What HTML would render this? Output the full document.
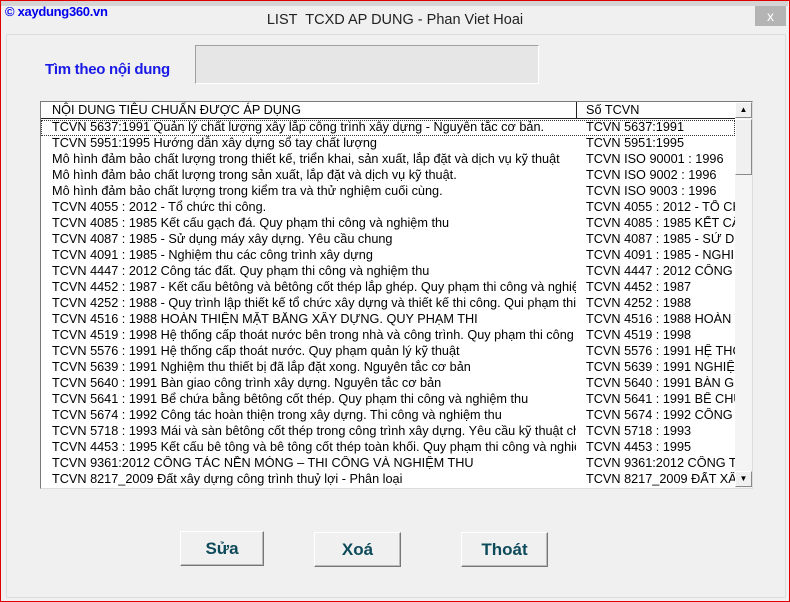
<!DOCTYPE html>
<html><head><meta charset="utf-8"><style>
*{margin:0;padding:0;box-sizing:border-box}
body{width:790px;height:602px;background:#f0f0f0;position:relative;overflow:hidden;font-family:"Liberation Sans",sans-serif}
.frame{position:absolute;left:0;top:0;width:790px;height:602px;border:1px solid #e00000;border-top-width:1px}
.topbar{position:absolute;left:1px;top:1px;width:787px;height:5px;background:#d4d4d4}
.logo{position:absolute;left:5px;top:4px;color:#0000ee;font-weight:bold;font-size:13px;letter-spacing:-0.3px}
.title{position:absolute;left:0;width:790px;top:12px;text-align:center;font-size:14.5px;color:#222}
.close{position:absolute;left:755px;top:6px;width:31px;height:20px;background:#b4b4b4;color:#fff;font-size:14px;text-align:center;line-height:20px}
.panel{position:absolute;left:6px;top:34px;width:780px;height:564px;border:1px solid #dcdcdc;border-right-color:#dcdcdc}
.lbl{position:absolute;left:45px;top:61px;color:#1a1ae6;font-weight:bold;font-size:15px;letter-spacing:-0.3px}
.tb{position:absolute;left:195px;top:45px;width:344px;height:39px;background:#e6e6e6;border:1px solid #a0a0a0;border-right-color:#fff;border-bottom-color:#fff}
.list{position:absolute;left:40px;top:101px;width:713px;height:388px;background:#fff;border:1px solid #7a7a7a;border-right-color:#ddd;border-bottom-color:#ddd;overflow:hidden;font-size:12.7px;color:#000}
.hdr{position:absolute;left:0;top:0;width:694px;height:17px;border-bottom:1px solid #222}
.hdr span{position:absolute;top:1px}
.hdiv{position:absolute;left:535px;top:0;width:1px;height:17px;background:#222}
.row{position:absolute;left:0;width:694px;height:16px;white-space:nowrap}
.c1{position:absolute;left:11px;width:524px;overflow:hidden}
.c2{position:absolute;left:545px;width:149px;overflow:hidden}
.sel{outline:1px dotted #333;outline-offset:-1px}
.sb{position:absolute;left:694px;top:0;width:17px;height:386px;background:#f4f4f4}
.ar{position:absolute;left:0;width:17px;height:16px;background:#f0f0f0;border:1px solid #fff;border-right-color:#888;border-bottom-color:#888;font-size:8px;text-align:center;line-height:14px}
.th{position:absolute;left:0;top:17px;width:17px;height:56px;background:#f0f0f0;border:1px solid #fff;border-right-color:#888;border-bottom-color:#888}
.btn{position:absolute;height:35px;background:#f0f0f0;border:1px solid #fff;border-right-color:#777;border-bottom-color:#777;box-shadow:inset -1px -1px 0 #bbb;color:#0d4a5a;font-weight:bold;font-size:17px;text-align:center;line-height:33px}
</style></head><body>
<div class="frame"></div>
<div class="topbar"></div>
<div class="logo">© xaydung360.vn</div>
<div class="title">LIST&nbsp; TCXD AP DUNG - Phan Viet Hoai</div>
<div class="close">x</div>
<div class="panel"></div>
<div class="lbl">Tìm theo nội dung</div>
<div class="tb"></div>
<div class="list">
<div class="hdr"><span style="left:11px">NỘI DUNG TIÊU CHUẨN ĐƯỢC ÁP DỤNG</span><div class="hdiv"></div><span style="left:545px">Số TCVN</span></div>
<div class="row sel" style="top:18px"><span class="c1">TCVN 5637:1991 Quản lý chất lượng xây lắp công trình xây dựng - Nguyên tắc cơ bản.</span><span class="c2">TCVN 5637:1991</span></div>
<div class="row" style="top:34px"><span class="c1">TCVN 5951:1995 Hướng dẫn xây dựng sổ tay chất lượng</span><span class="c2">TCVN 5951:1995</span></div>
<div class="row" style="top:50px"><span class="c1">Mô hình đảm bảo chất lượng trong thiết kế, triển khai, sản xuất, lắp đặt và dịch vụ kỹ thuật</span><span class="c2">TCVN ISO 90001 : 1996</span></div>
<div class="row" style="top:66px"><span class="c1">Mô hình đảm bảo chất lượng trong sản xuất, lắp đặt và dịch vụ kỹ thuật.</span><span class="c2">TCVN ISO 9002 : 1996</span></div>
<div class="row" style="top:82px"><span class="c1">Mô hình đảm bảo chất lượng trong kiểm tra và thử nghiệm cuối cùng.</span><span class="c2">TCVN ISO 9003 : 1996</span></div>
<div class="row" style="top:98px"><span class="c1">TCVN 4055 : 2012 - Tổ chức thi công.</span><span class="c2">TCVN 4055 : 2012 - TỔ CHỨC</span></div>
<div class="row" style="top:114px"><span class="c1">TCVN 4085 : 1985 Kết cấu gạch đá. Quy phạm thi công và nghiệm thu</span><span class="c2">TCVN 4085 : 1985 KẾT CẤU</span></div>
<div class="row" style="top:130px"><span class="c1">TCVN 4087 : 1985 - Sử dụng máy xây dựng. Yêu cầu chung</span><span class="c2">TCVN 4087 : 1985 - SỬ DỤNG</span></div>
<div class="row" style="top:146px"><span class="c1">TCVN 4091 : 1985 - Nghiệm thu các công trình xây dựng</span><span class="c2">TCVN 4091 : 1985 - NGHIỆM</span></div>
<div class="row" style="top:162px"><span class="c1">TCVN 4447 : 2012 Công tác đất. Quy phạm thi công và nghiệm thu</span><span class="c2">TCVN 4447 : 2012 CÔNG TÁC</span></div>
<div class="row" style="top:178px"><span class="c1">TCVN 4452 : 1987 - Kết cấu bêtông và bêtông cốt thép lắp ghép. Quy phạm thi công và nghiệm thu</span><span class="c2">TCVN 4452 : 1987</span></div>
<div class="row" style="top:194px"><span class="c1">TCVN 4252 : 1988 - Quy trình lập thiết kế tổ chức xây dựng và thiết kế thi công. Qui phạm thi công</span><span class="c2">TCVN 4252 : 1988</span></div>
<div class="row" style="top:210px"><span class="c1">TCVN 4516 : 1988 HOÀN THIỆN MẶT BẰNG XÂY DỰNG. QUY PHẠM THI</span><span class="c2">TCVN 4516 : 1988 HOÀN THIỆN</span></div>
<div class="row" style="top:226px"><span class="c1">TCVN 4519 : 1998 Hệ thống cấp thoát nước bên trong nhà và công trình. Quy phạm thi công và nghiệm thu</span><span class="c2">TCVN 4519 : 1998</span></div>
<div class="row" style="top:242px"><span class="c1">TCVN 5576 : 1991 Hệ thống cấp thoát nước. Quy phạm quản lý kỹ thuật</span><span class="c2">TCVN 5576 : 1991 HỆ THỐNG</span></div>
<div class="row" style="top:258px"><span class="c1">TCVN 5639 : 1991 Nghiệm thu thiết bị đã lắp đặt xong. Nguyên tắc cơ bản</span><span class="c2">TCVN 5639 : 1991 NGHIỆM THU</span></div>
<div class="row" style="top:274px"><span class="c1">TCVN 5640 : 1991 Bàn giao công trình xây dựng. Nguyên tắc cơ bản</span><span class="c2">TCVN 5640 : 1991 BÀN GIAO</span></div>
<div class="row" style="top:290px"><span class="c1">TCVN 5641 : 1991 Bể chứa bằng bêtông cốt thép. Quy phạm thi công và nghiệm thu</span><span class="c2">TCVN 5641 : 1991 BỂ CHỨA</span></div>
<div class="row" style="top:306px"><span class="c1">TCVN 5674 : 1992 Công tác hoàn thiện trong xây dựng. Thi công và nghiệm thu</span><span class="c2">TCVN 5674 : 1992 CÔNG TÁC</span></div>
<div class="row" style="top:322px"><span class="c1">TCVN 5718 : 1993 Mái và sàn bêtông cốt thép trong công trình xây dựng. Yêu cầu kỹ thuật chống thấm</span><span class="c2">TCVN 5718 : 1993</span></div>
<div class="row" style="top:338px"><span class="c1">TCVN 4453 : 1995 Kết cấu bê tông và bê tông cốt thép toàn khối. Quy phạm thi công và nghiệm thu</span><span class="c2">TCVN 4453 : 1995</span></div>
<div class="row" style="top:354px"><span class="c1">TCVN 9361:2012 CÔNG TÁC NỀN MÓNG – THI CÔNG VÀ NGHIỆM THU</span><span class="c2">TCVN 9361:2012 CÔNG TÁC</span></div>
<div class="row" style="top:370px"><span class="c1">TCVN 8217_2009 Đất xây dựng công trình thuỷ lợi - Phân loại</span><span class="c2">TCVN 8217_2009 ĐẤT XÂY</span></div>
<div class="sb"><div class="ar" style="top:0">▲</div><div class="th"></div><div class="ar" style="top:369px">▼</div></div>
</div>
<div class="btn" style="left:180px;top:531px;width:84px">Sửa</div>
<div class="btn" style="left:314px;top:532px;width:87px">Xoá</div>
<div class="btn" style="left:461px;top:532px;width:87px">Thoát</div>
</body></html>
